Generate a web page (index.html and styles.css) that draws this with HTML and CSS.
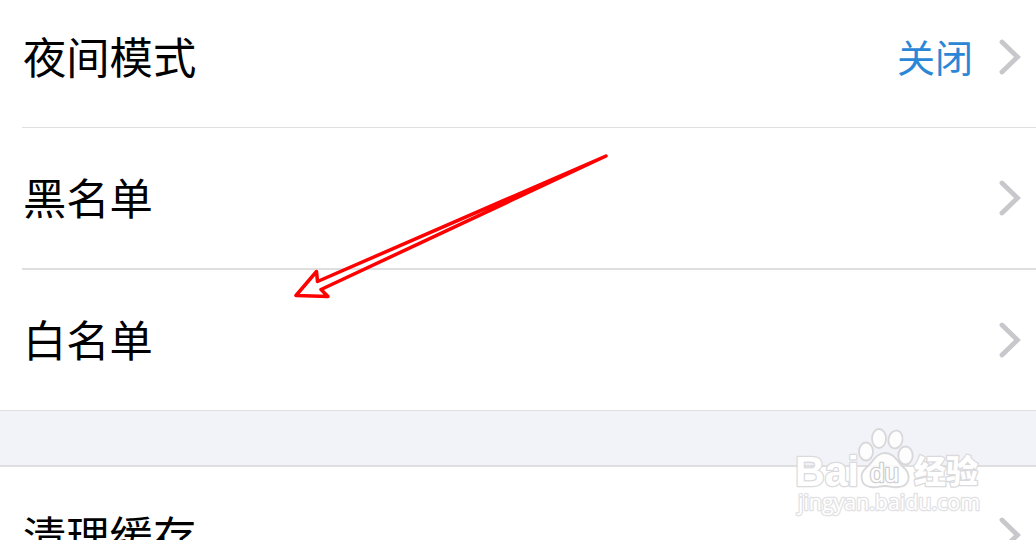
FILE: index.html
```html
<!DOCTYPE html>
<html lang="zh-CN">
<head>
    <meta charset="UTF-8">
    <meta name="viewport" content="width=device-width, initial-scale=1.0">
    <title>设置</title>
    <link rel="stylesheet" href="styles.css">
</head>
<body>
    <div class="page">
        <ul class="group group-first">
            <li class="row">
                <span class="label">夜间模式</span>
                <span class="value">关闭</span>
                <svg class="chevron" viewBox="0 0 22 36"><path d="M3 3L18.500 18L3 33"/></svg>
            </li>
            <li class="row row-thick">
                <span class="label">黑名单</span>
                <svg class="chevron" viewBox="0 0 22 36"><path d="M3 3L18.500 18L3 33"/></svg>
            </li>
            <li class="row">
                <span class="label">白名单</span>
                <svg class="chevron" viewBox="0 0 22 36"><path d="M3 3L18.500 18L3 33"/></svg>
            </li>
        </ul>
        <div class="gap"></div>
        <ul class="group">
            <li class="row row-last">
                <span class="label">清理缓存</span>
                <svg class="chevron" viewBox="0 0 22 36"><path d="M3 3L18.500 18L3 33"/></svg>
            </li>
        </ul>

        <!-- 指向白名单的箭头 -->
        <svg class="arrow" viewBox="0 0 320 150">
            <path d="M316 6L27.500 131.500L26.500 121.500L6 145.500L38 146.500L31 139.500Z"/>
        </svg>

        <!-- 水印 -->
        <svg class="watermark" viewBox="0 0 200 100">
            <g class="paw">
                <ellipse cx="76" cy="26.500" rx="7" ry="9"/>
                <ellipse cx="89" cy="13.500" rx="7" ry="9.500"/>
                <ellipse cx="105.500" cy="14.500" rx="7" ry="9" transform="rotate(12 105.500 14.500)"/>
                <ellipse cx="115.500" cy="30.500" rx="7.200" ry="9"/>
                <path d="M95 28C104 28 107 36 113 42C122 49 120 62 108 62C103 63 100 61 95 61C90 61 86 63 81 62C70 61 69 49 76 43C83 37 86 28 95 28Z"/>
            </g>
            <text class="mark mark-bai" x="5" y="61" textLength="64" lengthAdjust="spacingAndGlyphs">Bai</text>
            <text class="mark mark-du" x="80" y="57" textLength="29" lengthAdjust="spacingAndGlyphs">du</text>
            <text class="mark mark-cn" x="124" y="58" textLength="64" lengthAdjust="spacingAndGlyphs">经验</text>
            <text class="mark mark-url" x="8" y="85" textLength="182" lengthAdjust="spacingAndGlyphs">jingyan.baidu.com</text>
        </svg>
    </div>
</body>
</html>
```
FILE: styles.css
```css
* {
    margin: 0;
    padding: 0;
    box-sizing: border-box;
}

body {
    background-color: #fff;
    font-family: "Noto Sans CJK SC", sans-serif;
    overflow: hidden;
}

.page {
    position: relative;
    height: 540px;
    overflow: hidden;
}

.group {
    list-style: none;
    padding-left: 22px;
}

.group-first {
    margin-top: -13px;
}

.row {
    display: flex;
    align-items: center;
    height: 141px;
    padding-right: 15px;
    border-bottom: 1px solid #dfdfdf;
}

.row-thick {
    height: 142px;
    border-bottom-width: 2px;
}

.group-first .row:last-child {
    height: 140px;
    border-bottom: none;
}

.row-last {
    height: 137px;
    border-bottom: none;
}

.label {
    flex: 1;
    padding: 0 0 4px 1px;
    font-size: 43.3px;
    line-height: 60px;
    color: #000;
}

.value {
    margin-right: 26px;
    padding-bottom: 3px;
    font-size: 38px;
    line-height: 56px;
    color: #2b87d6;
}

.chevron {
    width: 22px;
    height: 36px;
    margin-bottom: 1px;
    fill: none;
    stroke: #c7c7cc;
    stroke-width: 4.8;
    stroke-linecap: round;
}

.gap {
    height: 57px;
    background-color: #f2f3f8;
    border-top: 1px solid #dfdfdf;
    border-bottom: 2px solid #dfdfdf;
}

.arrow {
    position: absolute;
    left: 290px;
    top: 150px;
    width: 320px;
    height: 150px;
    fill: none;
    stroke: #f00;
    stroke-width: 3.5;
    stroke-linejoin: round;
}

.watermark {
    position: absolute;
    left: 790px;
    top: 425px;
    width: 200px;
    height: 100px;
}

.paw {
    fill: #fff;
    fill-opacity: 0.8;
    stroke: #d8d8da;
    stroke-width: 1.8;
}

.mark {
    fill: #fff;
    stroke: #dadadc;
    stroke-width: 2.6;
    stroke-linejoin: round;
    paint-order: stroke;
}

.mark-bai {
    font-family: "Liberation Sans", sans-serif;
    font-size: 43px;
    font-weight: bold;
}

.mark-du {
    font-family: "Liberation Sans", sans-serif;
    font-size: 25px;
    stroke: #cfcfd2;
}

.mark-cn {
    font-size: 32px;
    font-weight: 900;
}

.mark-url {
    font-family: "Open Sans", sans-serif;
    font-size: 21px;
    stroke: #e2e2e4;
}
```
